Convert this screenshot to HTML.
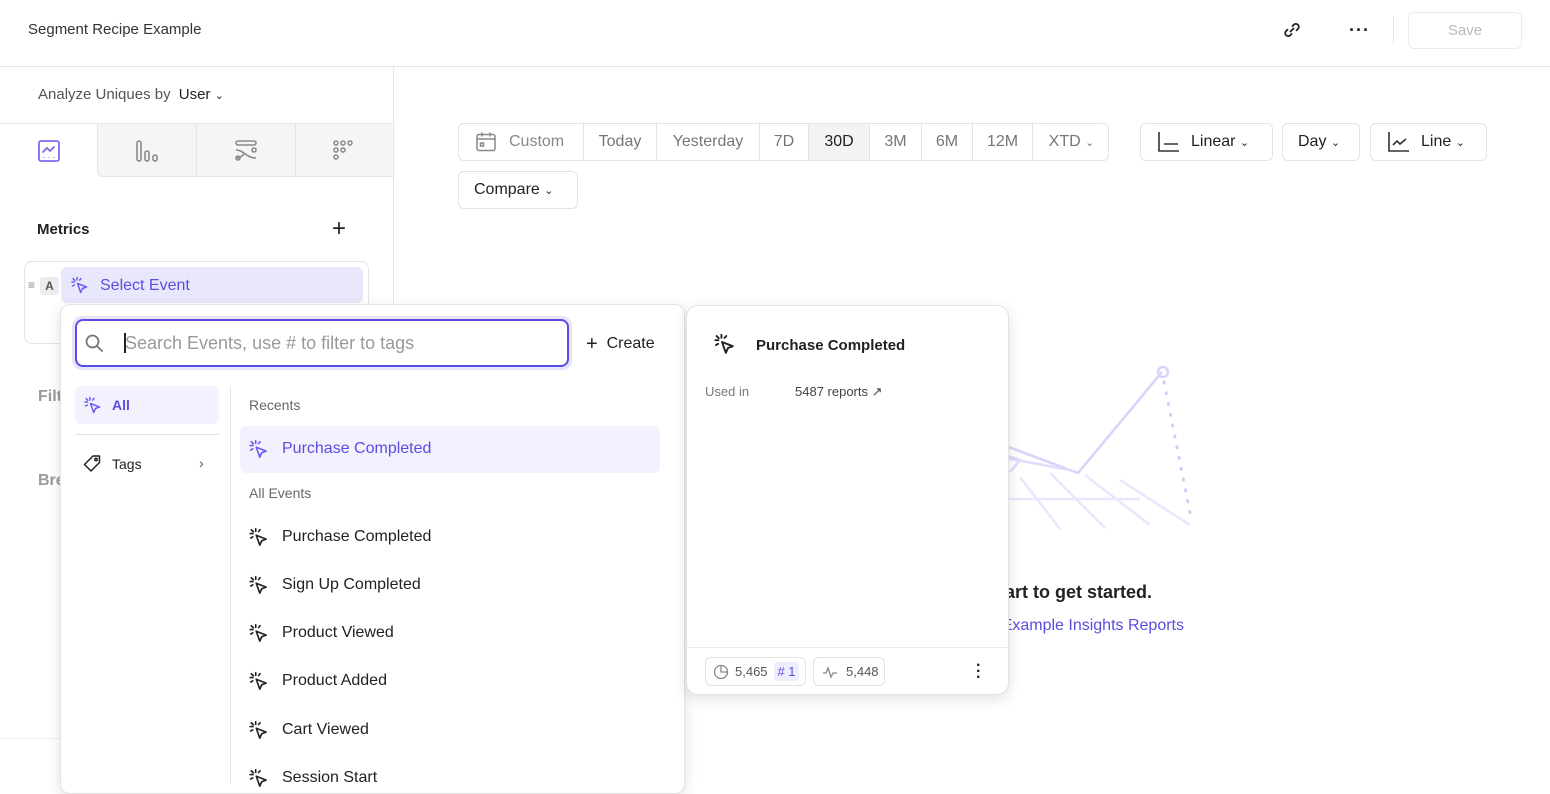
<!DOCTYPE html>
<html><head><meta charset="utf-8"><style>
*{box-sizing:border-box;margin:0;padding:0}
body{width:1550px;height:784px;overflow:hidden;background:#fff;font-family:"Liberation Sans",sans-serif;color:#1f1f1f;position:relative}
.a{position:absolute}
.t{position:absolute;white-space:nowrap}
.seg{position:absolute;top:0;height:37px;line-height:36px;font-size:16px;color:#767676;text-align:center;border-left:1px solid #e4e4e4}
.btn{position:absolute;border:1px solid #e2e2e2;border-radius:6px;height:38px;line-height:36px;font-size:16px;color:#222}
.ev{position:absolute;left:248px;font-size:16px;color:#222;white-space:nowrap}
.ev svg{position:absolute;left:0;top:0}
.ev span{position:absolute;left:34px;top:1px}
</style></head><body>
<!-- header -->
<div class="t" style="left:28px;top:21px;font-size:15px;color:#333">Segment Recipe Example</div>
<svg class="a" style="left:1282px;top:20px" width="20" height="20" viewBox="0 0 20 20" fill="none" stroke="#222" stroke-width="1.8" stroke-linecap="round"><path d="M8.5 11.5l3-3"/><path d="M10.5 6l1.5-1.5a3 3 0 0 1 4.2 4.2L14.5 10.3"/><path d="M9.5 14l-1.5 1.5a3 3 0 0 1-4.2-4.2L5.5 9.7"/></svg>
<div class="t" style="left:1349px;top:20px;font-size:18px;font-weight:bold;color:#222;letter-spacing:1px">···</div>
<div class="a" style="left:1393px;top:16px;width:1px;height:28px;background:#e8e8e8"></div>
<div class="a" style="left:1408px;top:12px;width:114px;height:37px;border:1px solid #ececec;border-radius:6px;text-align:center;line-height:35px;font-size:15px;color:#b9b9b9">Save</div>
<div class="a" style="left:0;top:66px;width:1550px;height:1px;background:#e6e6e6"></div>
<!-- left panel -->
<div class="a" style="left:393px;top:67px;width:1px;height:717px;background:#e6e6e6"></div>
<div class="t" style="left:38px;top:86px;font-size:15px;color:#555">Analyze Uniques by <b style="color:#222;font-weight:normal;margin-left:4px">User</b> <span style="font-size:11px;color:#222">&#8964;</span></div>
<div class="a" style="left:0;top:123px;width:393px;height:1px;background:#e6e6e6"></div>
<div class="a" style="left:97px;top:124px;width:296px;height:53px;background:#f5f5f5;border-left:1px solid #e4e4e4;border-bottom:1px solid #e4e4e4;border-bottom-left-radius:6px"></div>
<div class="a" style="left:196px;top:124px;width:1px;height:52px;background:#e4e4e4"></div>
<div class="a" style="left:295px;top:124px;width:1px;height:52px;background:#e4e4e4"></div>
<svg class="a" style="left:37px;top:139px" width="24" height="24" viewBox="0 0 24 24" fill="none" stroke="#7b6cf0" stroke-width="1.8"><rect x="2" y="2" width="20" height="20" rx="2"/><path d="M6 13l4-4 3 3 4-4" stroke-linecap="round"/><path d="M7 18v.5M12 18v.5M17 18v.5"/></svg>
<svg class="a" style="left:135px;top:139px" width="26" height="24" viewBox="0 0 26 24" fill="none" stroke="#8a8a8a" stroke-width="1.6"><rect x="2" y="2" width="4" height="20" rx="2"/><rect x="10" y="12" width="4" height="10" rx="2"/><rect x="18" y="16" width="4" height="6" rx="2"/></svg>
<svg class="a" style="left:234px;top:139px" width="26" height="24" viewBox="0 0 26 24" fill="none" stroke="#8a8a8a" stroke-width="1.6"><rect x="2" y="2" width="20" height="4" rx="2"/><path d="M2 11c8 0 10 8 20 8M2 19c4 0 6-2 8-4"/><circle cx="20" cy="11" r="2"/><circle cx="4" cy="19" r="2"/></svg>
<svg class="a" style="left:332px;top:139px" width="26" height="24" viewBox="0 0 26 24" fill="none" stroke="#8a8a8a" stroke-width="1.5"><circle cx="4" cy="4" r="2"/><circle cx="11" cy="4" r="2"/><circle cx="18" cy="4" r="2"/><circle cx="4" cy="11" r="2"/><circle cx="11" cy="11" r="2"/><circle cx="4" cy="18" r="2"/></svg>
<div class="t" style="left:37px;top:221px;font-size:15px;font-weight:bold;color:#222">Metrics</div>
<div class="t" style="left:332px;top:215px;font-size:24px;color:#222">+</div>
<div class="a" style="left:24px;top:261px;width:345px;height:83px;border:1px solid #e4e4e4;border-radius:8px"></div>
<div class="t" style="left:28px;top:278px;font-size:12px;color:#888">≡</div>
<div class="a" style="left:40px;top:277px;width:19px;height:18px;background:#ececec;border-radius:3px;font-size:12px;font-weight:bold;color:#555;text-align:center;line-height:18px">A</div>
<div class="a" style="left:61px;top:267px;width:302px;height:36px;background:#e9e7fb;border-radius:6px"></div>
<svg class="a" style="left:70px;top:276px" width="20" height="20" viewBox="0 0 20 20" fill="none" stroke="#6a5cf0" stroke-width="1.5" stroke-linecap="round"><path d="M7 1.5v2.5M2 6h2.5M3 2.5l1.8 1.8M11 2.5l-1.4 1.6M2.5 10l1.8-1"/><path d="M7.5 7.5l9 3.5-4 1.5-1.8 4z" stroke-linejoin="round"/></svg>
<div class="t" style="left:100px;top:277px;font-size:16px;color:#5a4de0">Select Event</div>
<div class="t" style="left:38px;top:388px;font-size:16px;font-weight:bold;color:#999">Filt</div>
<div class="t" style="left:38px;top:472px;font-size:16px;font-weight:bold;color:#999">Bre</div>
<div class="a" style="left:0;top:738px;width:393px;height:1px;background:#eee"></div>
<!-- toolbar -->
<div class="a" style="left:458px;top:123px;width:651px;height:38px;border:1px solid #e2e2e2;border-radius:6px;overflow:hidden">
<svg class="a" style="left:16px;top:7px" width="22" height="22" viewBox="0 0 22 22" fill="none" stroke="#888" stroke-width="1.5"><rect x="2" y="3.5" width="18" height="16" rx="2"/><path d="M2 8h18M7 1.5v4M15 1.5v4"/><rect x="5.5" y="12" width="3" height="3"/></svg>
<div class="t" style="left:50px;top:0;line-height:36px;font-size:16px;color:#888">Custom</div>
<div class="seg" style="left:124px;width:73px">Today</div>
<div class="seg" style="left:197px;width:103px">Yesterday</div>
<div class="seg" style="left:300px;width:49px">7D</div>
<div class="seg" style="left:349px;width:61px;background:#f3f3f3;color:#222">30D</div>
<div class="seg" style="left:410px;width:52px">3M</div>
<div class="seg" style="left:462px;width:51px">6M</div>
<div class="seg" style="left:513px;width:60px">12M</div>
<div class="seg" style="left:573px;width:78px">XTD <span style="font-size:11px">&#8964;</span></div>
</div>
<div class="btn" style="left:1140px;top:123px;width:133px"><svg class="a" style="left:16px;top:7px" width="24" height="22" viewBox="0 0 24 22" fill="none" stroke="#333" stroke-width="1.6"><path d="M2 1v19h20M7 13h14"/></svg><span class="a" style="left:50px">Linear <span style="font-size:11px">&#8964;</span></span></div>
<div class="btn" style="left:1282px;top:123px;width:78px;padding-left:15px">Day <span style="font-size:11px">&#8964;</span></div>
<div class="btn" style="left:1370px;top:123px;width:117px"><svg class="a" style="left:16px;top:7px" width="24" height="22" viewBox="0 0 24 22" fill="none" stroke="#333" stroke-width="1.6"><path d="M2 1v19h20"/><path d="M6 14l4-4 3 3 6-5"/></svg><span class="a" style="left:50px">Line <span style="font-size:11px">&#8964;</span></span></div>
<div class="btn" style="left:458px;top:171px;width:120px;padding-left:15px">Compare <span style="font-size:11px">&#8964;</span></div>
<!-- illustration -->
<svg class="a" style="left:990px;top:355px" width="210" height="185" viewBox="0 0 210 185" fill="none" stroke="#d6d4fb" stroke-width="2.5">
<path d="M0 85l88 33 84-101"/><circle cx="173" cy="17" r="5"/>
<path d="M174 27l27 136" stroke-dasharray="1 10" stroke-linecap="round" stroke="#cfcbf8" stroke-width="3"/>
<path d="M0 95l30 10-10 12 M0 100l80 15" stroke="#dedcfc"/>
<path d="M0 144h150M30 122l40 52M60 118l55 55M95 120l65 50M130 125l70 45M0 150l8 25" stroke="#e8e7fd"/>
</svg>
<div class="t" style="right:398px;top:582px;font-size:18px;font-weight:bold;color:#222">Create a chart to get started.</div>
<div class="t" style="right:366px;top:617px;font-size:16px;color:#5a4de0">Or explore Example Insights Reports</div>
<!-- dropdown -->
<div class="a" style="left:60px;top:304px;width:625px;height:490px;background:#fff;border:1px solid #e2e2e2;border-radius:10px;box-shadow:0 4px 14px rgba(0,0,0,.12)"></div>
<div class="a" style="left:72px;top:316px;width:500px;height:54px;border-radius:10px;background:#e6e4fb"></div>
<div class="a" style="left:75px;top:319px;width:494px;height:48px;border:2px solid #5a4de0;border-radius:8px;background:#fff"></div>
<svg class="a" style="left:84px;top:333px" width="20" height="20" viewBox="0 0 20 20" fill="none" stroke="#777" stroke-width="1.8"><circle cx="8.5" cy="8.5" r="6"/><path d="M13 13l5 5" stroke-linecap="round"/></svg>
<div class="a" style="left:124px;top:333px;width:1.5px;height:20px;background:#222"></div>
<div class="t" style="left:125px;top:333px;font-size:18px;color:#999">Search Events, use # to filter to tags</div>
<div class="t" style="left:586px;top:333px;font-size:16px;color:#222"><span style="font-size:20px;vertical-align:-2px">+</span>&nbsp; Create</div>
<div class="a" style="left:75px;top:386px;width:144px;height:38px;background:#f2f1fd;border-radius:6px"></div>
<svg class="a" style="left:83px;top:396px" width="20" height="20" viewBox="0 0 20 20" fill="none" stroke="#6a5cf0" stroke-width="1.5" stroke-linecap="round"><path d="M7 1.5v2.5M2 6h2.5M3 2.5l1.8 1.8M11 2.5l-1.4 1.6M2.5 10l1.8-1"/><path d="M7.5 7.5l9 3.5-4 1.5-1.8 4z" stroke-linejoin="round"/></svg>
<div class="t" style="left:112px;top:397px;font-size:14px;font-weight:bold;color:#5a4de0">All</div>
<div class="a" style="left:75px;top:434px;width:144px;height:1px;background:#e2e2e2"></div>
<svg class="a" style="left:82px;top:454px" width="20" height="20" viewBox="0 0 20 20" fill="none" stroke="#222" stroke-width="1.5" stroke-linejoin="round"><path d="M11 2h6.5v6.5L9 17 2.5 10.5z"/><circle cx="14" cy="5.5" r="1.2"/></svg>
<div class="t" style="left:112px;top:456px;font-size:14px;color:#222">Tags</div>
<div class="t" style="left:199px;top:455px;font-size:14px;color:#555">›</div>
<div class="a" style="left:230px;top:386px;width:1px;height:398px;background:#e6e6e6"></div>
<div class="t" style="left:249px;top:397px;font-size:14px;color:#666">Recents</div>
<div class="a" style="left:240px;top:426px;width:420px;height:47px;background:#f2f1fd;border-radius:6px"></div>
<div class="ev" style="top:439px;color:#5a4de0"><svg width="22" height="22" viewBox="0 0 20 20" fill="none" stroke="#6a5cf0" stroke-width="1.5" stroke-linecap="round"><path d="M7 1.5v2.5M2 6h2.5M3 2.5l1.8 1.8M11 2.5l-1.4 1.6M2.5 10l1.8-1"/><path d="M7.5 7.5l9 3.5-4 1.5-1.8 4z" stroke-linejoin="round"/></svg><span>Purchase Completed</span></div>
<div class="t" style="left:249px;top:485px;font-size:14px;color:#666">All Events</div>
<div class="ev" style="top:527px"><svg width="22" height="22" viewBox="0 0 20 20" fill="none" stroke="#222" stroke-width="1.5" stroke-linecap="round"><path d="M7 1.5v2.5M2 6h2.5M3 2.5l1.8 1.8M11 2.5l-1.4 1.6M2.5 10l1.8-1"/><path d="M7.5 7.5l9 3.5-4 1.5-1.8 4z" stroke-linejoin="round"/></svg><span>Purchase Completed</span></div>
<div class="ev" style="top:575px"><svg width="22" height="22" viewBox="0 0 20 20" fill="none" stroke="#222" stroke-width="1.5" stroke-linecap="round"><path d="M7 1.5v2.5M2 6h2.5M3 2.5l1.8 1.8M11 2.5l-1.4 1.6M2.5 10l1.8-1"/><path d="M7.5 7.5l9 3.5-4 1.5-1.8 4z" stroke-linejoin="round"/></svg><span>Sign Up Completed</span></div>
<div class="ev" style="top:623px"><svg width="22" height="22" viewBox="0 0 20 20" fill="none" stroke="#222" stroke-width="1.5" stroke-linecap="round"><path d="M7 1.5v2.5M2 6h2.5M3 2.5l1.8 1.8M11 2.5l-1.4 1.6M2.5 10l1.8-1"/><path d="M7.5 7.5l9 3.5-4 1.5-1.8 4z" stroke-linejoin="round"/></svg><span>Product Viewed</span></div>
<div class="ev" style="top:671px"><svg width="22" height="22" viewBox="0 0 20 20" fill="none" stroke="#222" stroke-width="1.5" stroke-linecap="round"><path d="M7 1.5v2.5M2 6h2.5M3 2.5l1.8 1.8M11 2.5l-1.4 1.6M2.5 10l1.8-1"/><path d="M7.5 7.5l9 3.5-4 1.5-1.8 4z" stroke-linejoin="round"/></svg><span>Product Added</span></div>
<div class="ev" style="top:720px"><svg width="22" height="22" viewBox="0 0 20 20" fill="none" stroke="#222" stroke-width="1.5" stroke-linecap="round"><path d="M7 1.5v2.5M2 6h2.5M3 2.5l1.8 1.8M11 2.5l-1.4 1.6M2.5 10l1.8-1"/><path d="M7.5 7.5l9 3.5-4 1.5-1.8 4z" stroke-linejoin="round"/></svg><span>Cart Viewed</span></div>
<div class="ev" style="top:768px"><svg width="22" height="22" viewBox="0 0 20 20" fill="none" stroke="#222" stroke-width="1.5" stroke-linecap="round"><path d="M7 1.5v2.5M2 6h2.5M3 2.5l1.8 1.8M11 2.5l-1.4 1.6M2.5 10l1.8-1"/><path d="M7.5 7.5l9 3.5-4 1.5-1.8 4z" stroke-linejoin="round"/></svg><span>Session Start</span></div>
<!-- detail card -->
<div class="a" style="left:686px;top:305px;width:323px;height:390px;background:#fff;border:1px solid #e2e2e2;border-radius:12px;box-shadow:0 4px 14px rgba(0,0,0,.12)">
<svg class="a" style="left:26px;top:27px" width="24" height="24" viewBox="0 0 20 20" fill="none" stroke="#222" stroke-width="1.6" stroke-linecap="round"><path d="M7 1.5v2.5M2 6h2.5M3 2.5l1.8 1.8M11 2.5l-1.4 1.6M2.5 10l1.8-1"/><path d="M7.5 7.5l9 3.5-4 1.5-1.8 4z" stroke-linejoin="round"/></svg>
<div class="t" style="left:69px;top:31px;font-size:15px;font-weight:bold;color:#222">Purchase Completed</div>
<div class="t" style="left:18px;top:78px;font-size:13px;color:#777">Used in</div>
<div class="t" style="left:108px;top:78px;font-size:13px;color:#444">5487 reports ↗</div>
<div class="a" style="left:0;top:341px;width:321px;height:1px;background:#ececec"></div>
<div class="a" style="left:18px;top:351px;width:101px;height:29px;border:1px solid #e2e2e2;border-radius:6px">
<svg class="a" style="left:7px;top:6px" width="16" height="16" viewBox="0 0 16 16" fill="none" stroke="#888" stroke-width="1.3"><circle cx="8" cy="8" r="6.5"/><path d="M8 1.5V8h6.5"/></svg>
<div class="t" style="left:29px;top:6px;font-size:13px;color:#555">5,465</div>
<div class="a" style="left:68px;top:4px;width:25px;height:19px;background:#eeedfd;border-radius:3px;font-size:13px;color:#5a4de0;text-align:center;line-height:19px"># 1</div>
</div>
<div class="a" style="left:126px;top:351px;width:72px;height:29px;border:1px solid #e2e2e2;border-radius:6px">
<svg class="a" style="left:8px;top:7px" width="16" height="14" viewBox="0 0 16 14" fill="none" stroke="#888" stroke-width="1.3"><path d="M1 8h3l2-5 3 9 2-4h4"/></svg>
<div class="t" style="left:32px;top:6px;font-size:13px;color:#555">5,448</div>
</div>
<div class="t" style="left:289px;top:357px;font-size:16px;font-weight:bold;color:#222;line-height:6px">·<br>·<br>·</div>
</div>
</body></html>
